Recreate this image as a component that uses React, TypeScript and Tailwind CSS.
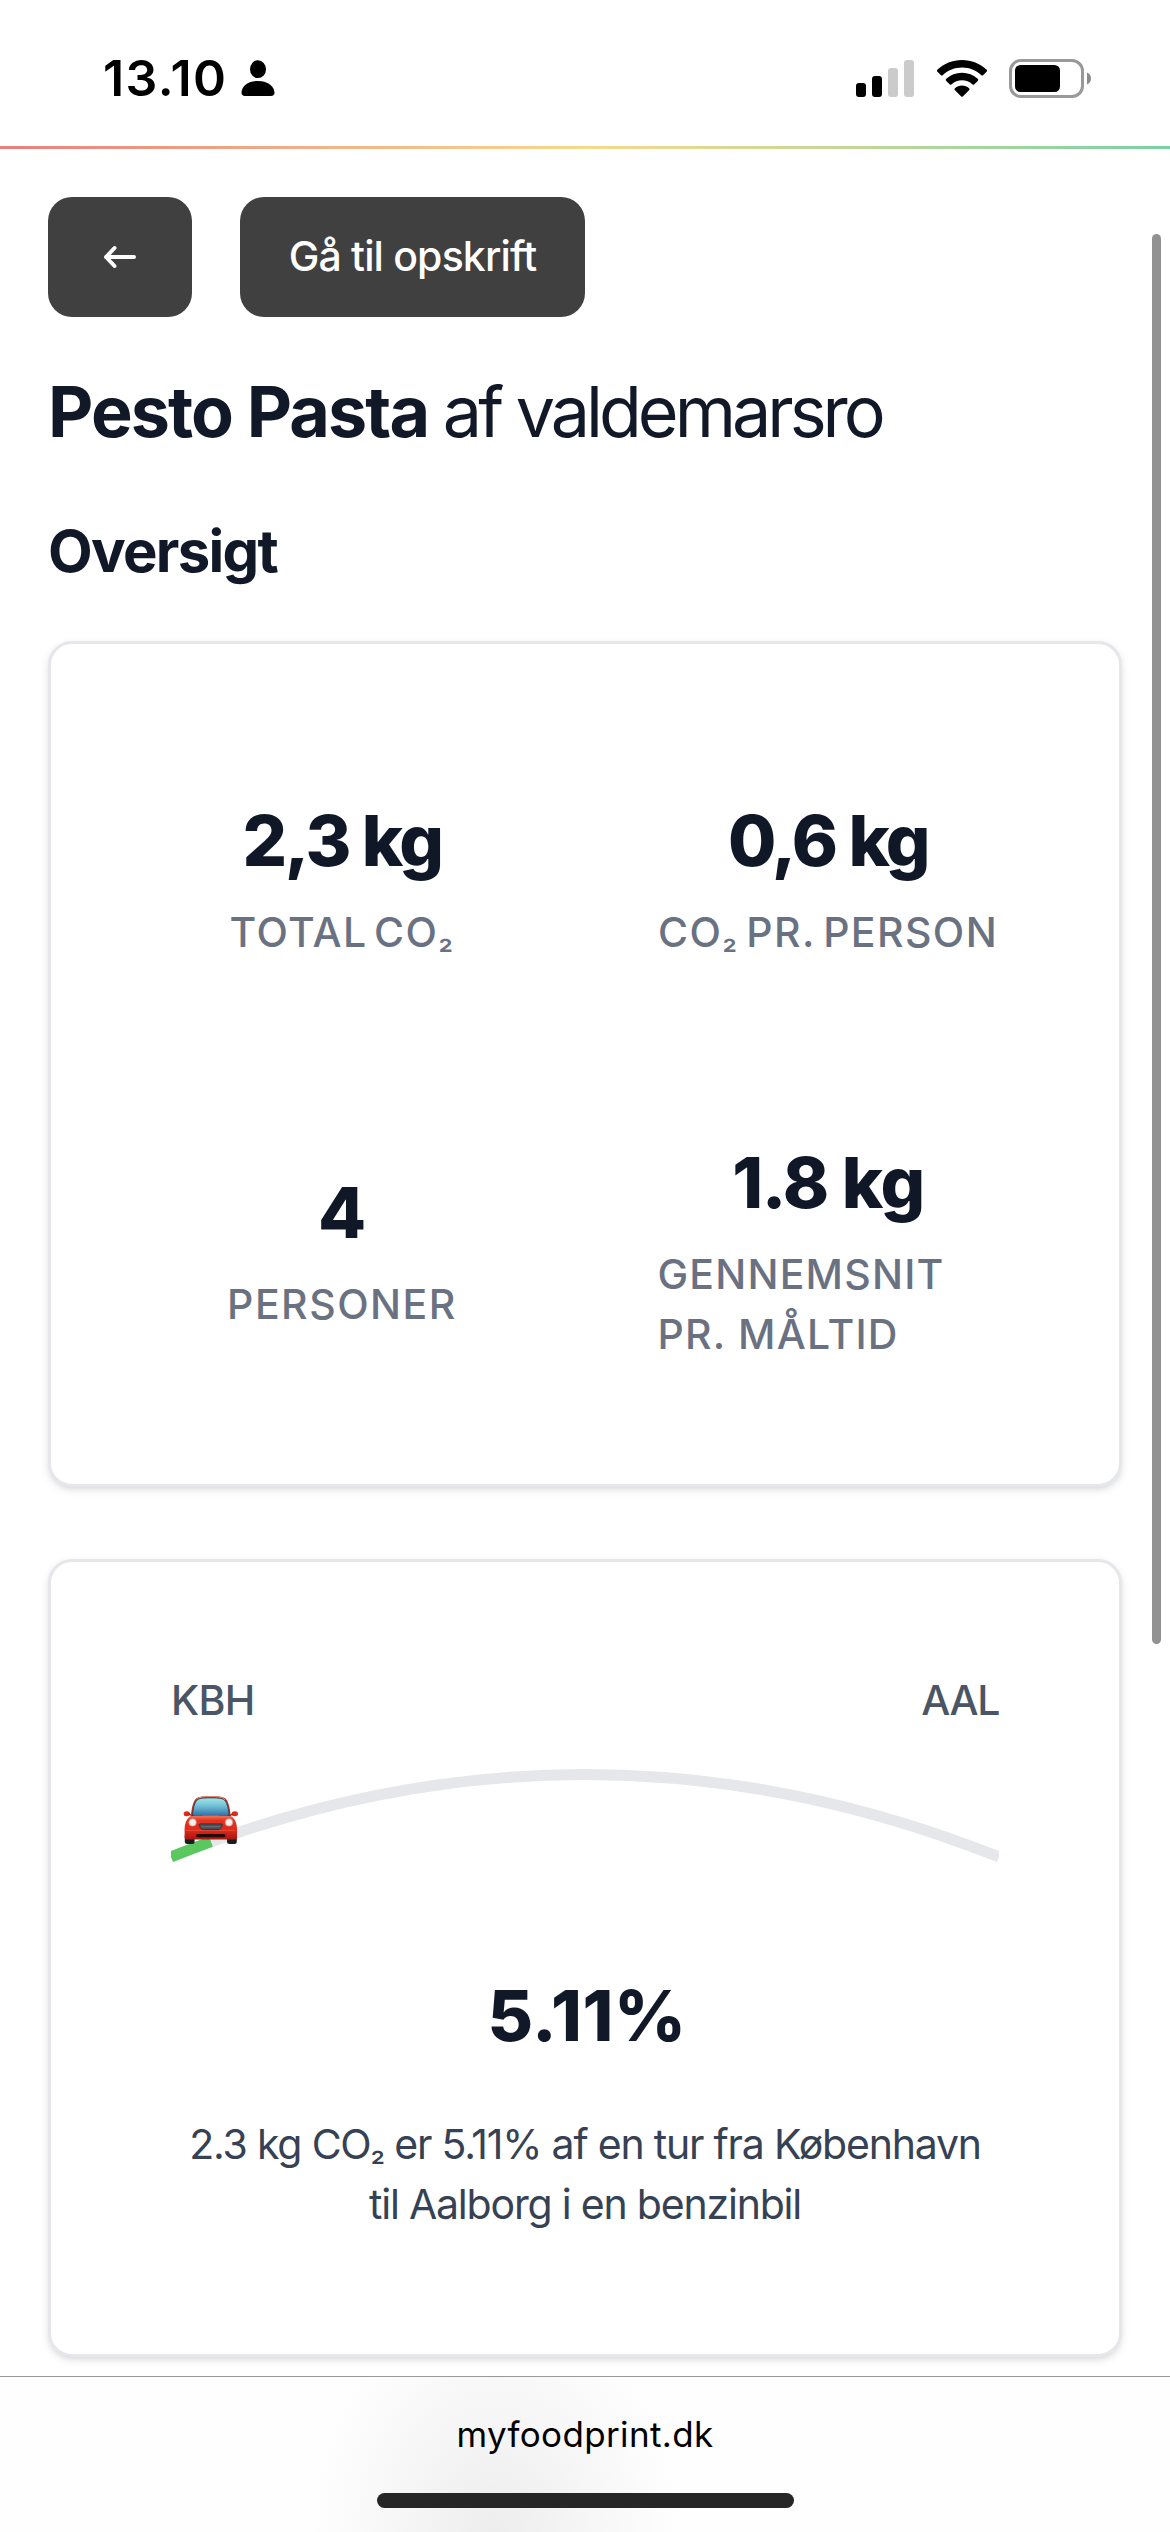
import React from 'react';

function PersonIcon() {
  return (
    <svg className="h-9 w-[34px]" viewBox="0 0 34 36" fill="#000">
      <ellipse cx="17" cy="9.2" rx="8" ry="8.9" />
      <path d="M4 36C1.6 36 .5 34.8 .5 32.8C.5 27 6.500 21 17 21s16.500 6 16.500 11.800c0 2-1.100 3.200-3.500 3.200z" />
    </svg>
  );
}

function SignalIcon() {
  return (
    <svg className="h-[37px] w-[58px]" viewBox="0 0 58 37">
      <rect x="0" y="23" width="10" height="14" rx="3" fill="#000" />
      <rect x="16" y="16" width="10" height="21" rx="3" fill="#000" />
      <rect x="32" y="8" width="10" height="29" rx="3" fill="#cbcbcb" />
      <rect x="48" y="0" width="10" height="37" rx="3" fill="#cbcbcb" />
    </svg>
  );
}

function WifiIcon() {
  return (
    <svg className="h-[37px] w-[50px]" viewBox="0 0 50 37" fill="#000">
      <path d="M25 0C34.500 0 43 3.500 49.500 9.600c.7.700.7 1.500 0 2.200L46.300 15c-.7.700-1.500.7-2.200 0C38.900 10.200 32.300 7.500 25 7.500S11.100 10.200 5.900 15c-.7.700-1.500.7-2.200 0L.5 11.800c-.7-.7-.7-1.500 0-2.200C7 3.500 15.500 0 25 0z" />
      <path d="M25 12.800c6 0 11.500 2.200 15.700 6 .7.700.7 1.400 0 2.100l-3.300 3.300c-.7.700-1.400.7-2.100.1C32.500 21.800 29 20.300 25 20.300s-7.500 1.500-10.300 4c-.7.600-1.400.6-2.100-.1L9.300 20.900c-.7-.7-.7-1.400 0-2.100 4.200-3.800 9.700-6 15.700-6z" />
      <path d="M25 25.600c2.700 0 5.100 1 7 2.600.7.700.7 1.300 0 2L26 36.300c-.7.700-1.300.7-2 0l-6-6.100c-.7-.7-.7-1.300 0-2 1.900-1.600 4.300-2.600 7-2.600z" />
    </svg>
  );
}

function BatteryIcon() {
  return (
    <svg className="h-[39px] w-[82px]" viewBox="0 0 82 39">
      <rect x="1.500" y="1.500" width="72" height="36" rx="10.500" fill="none" stroke="#999" strokeWidth="3" />
      <rect x="6" y="6" width="45" height="27" rx="5.500" fill="#000" />
      <path d="M78 13.500c2.500 1 4 3.200 4 6s-1.500 5-4 6z" fill="#8c8c8c" />
    </svg>
  );
}

function Car() {
  return (
    <g transform="translate(12.6 35.4)">
      <defs>
        <linearGradient id="glass" x1="0" y1="0" x2="0" y2="1">
          <stop offset="0" stopColor="#9fe6ea" />
          <stop offset=".5" stopColor="#6cb9d3" />
          <stop offset="1" stopColor="#2f6da3" />
        </linearGradient>
        <linearGradient id="paint" x1="0" y1="0" x2="0" y2="1">
          <stop offset="0" stopColor="#f0795f" />
          <stop offset=".2" stopColor="#e8341f" />
          <stop offset=".6" stopColor="#dd2a1b" />
          <stop offset="1" stopColor="#a81712" />
        </linearGradient>
      </defs>
      <rect x="1.200" y="38" width="9.800" height="10.500" rx="2.500" fill="#1c1c1e" />
      <rect x="43.400" y="38" width="9.800" height="10.500" rx="2.500" fill="#1c1c1e" />
      <ellipse cx="3.200" cy="18.300" rx="3.200" ry="2.500" fill="#d92b1c" />
      <ellipse cx="51.200" cy="18.300" rx="3.200" ry="2.500" fill="#d92b1c" />
      <path d="M5 18.500l4 2M49.400 18.500l-4 2" stroke="#b81f15" strokeWidth="1.500" />
      <path d="M7 22C8 14 8.800 8.500 11 5 13 1.500 17 .5 27.200.5S41.400 1.500 43.400 5c2.200 3.500 3 9 4 17z" fill="#b9301f" />
      <path d="M13 4.500C15.500 1.800 19 1.300 27.200 1.300s11.700.5 14.200 3.200" fill="none" stroke="#f1a18c" strokeWidth="1" />
      <path d="M8.800 20.500C9.500 13.500 10.500 8.500 12.700 5.500 14.500 3 18 2.500 27.200 2.500s12.700.5 14.500 3c2.200 3 3.200 8 3.900 15z" fill="url(#glass)" stroke="#2b3a45" strokeWidth=".8" />
      <path d="M6 21c6-1.200 36-1.200 42.400 0 3.400 3 5 7.500 5 12.500v8.500c0 1.200-.8 2-2 2H3c-1.200 0-2-.8-2-2v-8.500C1 28.500 2.600 24 6 21z" fill="url(#paint)" />
      <path d="M2.500 35h49.400" stroke="#f0533d" strokeWidth=".8" />
      <circle cx="9" cy="27" r="3.700" fill="#f4eeec" stroke="#b9a39f" strokeWidth=".8" />
      <circle cx="45.400" cy="27" r="3.700" fill="#f4eeec" stroke="#b9a39f" strokeWidth=".8" />
      <path d="M16.500 28.500h21.400c1 0 1.200.8.800 1.700-1.200 2.700-2.200 4-4.200 4H19.900c-2 0-3-1.300-4.200-4-.4-.9-.2-1.700.8-1.700z" fill="#4b5058" stroke="#2c2a2d" strokeWidth=".8" />
      <path d="M17.500 31.300h19.400" stroke="#7a7f86" strokeWidth=".7" />
      <rect x="12.500" y="38.600" width="29.400" height="3.200" rx="1.500" fill="#240b0a" />
    </g>
  );
}

function Co2() {
  return (
    <>
      CO<span className="text-[33px] leading-none">₂</span>
    </>
  );
}

function Stat({ value, children }: { value: React.ReactNode; children: React.ReactNode }) {
  return (
    <div className="flex flex-col items-center justify-center">
      <div className="text-[70px] leading-[72px] font-extrabold text-gray-900">{value}</div>
      <div className="mt-[25px] text-[41px] leading-[60px] font-medium text-gray-500">{children}</div>
    </div>
  );
}

export default function App() {
  return (
    <div className="relative flex h-[2532px] w-[1170px] flex-col overflow-hidden bg-white font-['Inter',sans-serif] text-[#111827]">
      <header className="flex h-[146px] shrink-0 items-start justify-between pt-[42px] pr-[79px] pl-[103px] text-black">
        <div className="flex h-[72px] items-center gap-[13px]">
          <span className="text-[50px] font-semibold tracking-[1.4px]">13.10</span>
          <PersonIcon />
        </div>
        <div className="flex h-[72px] items-center gap-[22.5px]">
          <SignalIcon />
          <WifiIcon />
          <BatteryIcon />
        </div>
      </header>
      <div className="h-[3px] shrink-0 bg-linear-to-r from-[#e77f80] via-[#f5d98c] to-[#78d1a4]" />

      <main className="flex h-[2227px] shrink-0 flex-col overflow-hidden px-12 pt-12">
        <div className="flex gap-12">
          <button className="flex h-[120px] w-36 items-center justify-center rounded-3xl bg-neutral-700">
            <svg className="h-6 w-9" viewBox="0 0 36 24" fill="none" stroke="#fff" strokeWidth="4" strokeLinecap="round" strokeLinejoin="round">
              <path d="M32 12H4M12.500 3L4 12l8.500 9" />
            </svg>
          </button>
          <button className="flex h-[120px] w-[345px] items-center justify-center rounded-3xl bg-neutral-700 text-[41px] font-medium tracking-[-0.84px] whitespace-nowrap text-white">
            Gå til opskrift
          </button>
        </div>

        <h1 className="mt-[55px] text-[70px] leading-[80px] font-bold tracking-[-1.9px] whitespace-nowrap">
          Pesto Pasta <span className="font-normal tracking-[-4px]">af valdemarsro</span>
        </h1>
        <h2 className="mt-[63px] text-[58px] leading-[72px] font-bold tracking-[-1.7px]">Oversigt</h2>

        <section className="mt-[54px] grid h-[846px] shrink-0 grid-cols-2 grid-rows-[382px_362px] rounded-3xl border-[3px] border-gray-200 bg-white px-12 py-12 shadow-[0_3px_9px_rgba(0,0,0,0.1),0_3px_6px_-3px_rgba(0,0,0,0.1)]">
          <Stat value={<span className="tracking-[-2.46px]">2,3 kg</span>}>
            <span className="tracking-[1.4px] [word-spacing:-6px]">
              TOTAL <Co2 />
            </span>
          </Stat>
          <Stat value={<span className="tracking-[-2.5px]">0,6 kg</span>}>
            <span className="tracking-[1.4px] [word-spacing:-4.5px]">
              <Co2 /> PR. PERSON
            </span>
          </Stat>
          <Stat value="4">
            <span className="tracking-[1.5px]">PERSONER</span>
          </Stat>
          <Stat value={<span className="tracking-[-1.4px]">1.8 kg</span>}>
            <p className="w-[341px] tracking-[1.2px]">GENNEMSNIT PR. MÅLTID</p>
          </Stat>
        </section>

        <section className="mt-[72px] flex h-[798px] shrink-0 flex-col rounded-3xl border-[3px] border-gray-200 bg-white px-[120px] pt-[108px] shadow-[0_3px_9px_rgba(0,0,0,0.1),0_3px_6px_-3px_rgba(0,0,0,0.1)]">
          <div className="flex justify-between text-[41px] leading-[60px] font-medium text-gray-600">
            <span className="tracking-[-0.66px]">KBH</span>
            <span className="tracking-[-1.4px]">AAL</span>
          </div>
          <svg className="mt-[30px] h-[110px] w-[828px]" viewBox="0 0 828 110" fill="none">
            <path d="M0 97Q414 -68 828 97" stroke="#e5e7eb" strokeWidth="11" />
            <path d="M0 97Q20 89 40 81.700" stroke="#5ac85f" strokeWidth="11" />
            <Car />
          </svg>
          <div className="mt-[110px] pl-1 text-center text-[70px] leading-[72px] font-extrabold tracking-[0.6px]">5.11%</div>
          <p className="mt-[62px] text-center text-[41px] leading-[60px] tracking-[-1.2px] whitespace-nowrap text-gray-700">
            2.3 kg <Co2 /> er 5.11% af en tur fra København
            <br />
            til Aalborg i en benzinbil
          </p>
        </section>
      </main>

      <footer className="flex flex-1 flex-col items-center border-t border-[#999] bg-[radial-gradient(ellipse_190px_240px_at_495px_156px,#ededed,#f6f6f6_50%,#fdfdfd_90%,#fefefe)]">
        <span className="mt-[35px] text-[35px] leading-[44px] tracking-[0.35px] text-black">myfoodprint.dk</span>
        <div className="mt-[37px] h-[15px] w-[417px] rounded-full bg-[#262626]" />
      </footer>

      <div className="absolute top-[234px] left-[1152px] h-[1410px] w-[9px] rounded-full bg-[#929292]" />
    </div>
  );
}
